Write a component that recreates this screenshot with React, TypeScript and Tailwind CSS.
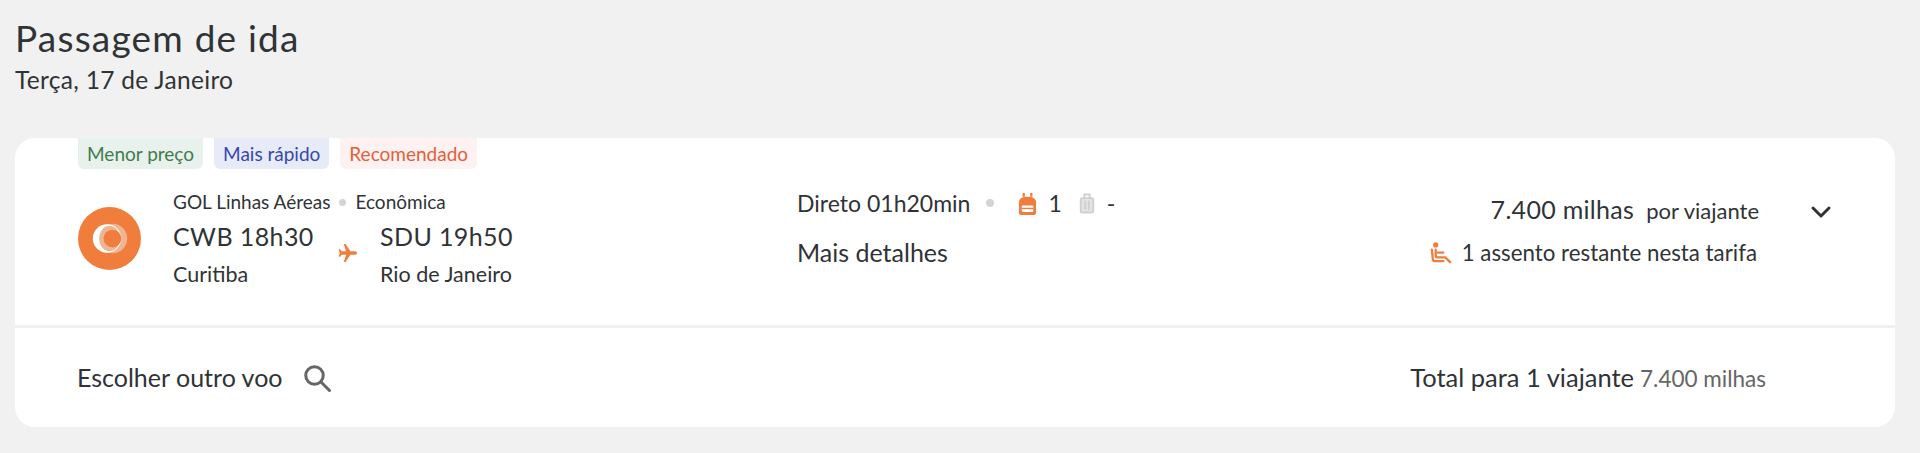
export default function App() {
  const font = { fontFamily: 'Lato, "Noto Sans", sans-serif' };
  return (
    <div style={font} className="h-[453px] bg-[#f1f1f1] px-[15px] pt-[16px] text-[#303336]">
      <h1 className="text-[37px] leading-[44px] font-normal tracking-[1.2px]">Passagem de ida</h1>
      <p className="mt-[4px] text-[24.5px] leading-[32px] tracking-[0.3px]">Terça, 17 de Janeiro</p>
      <div className="mt-[42px] h-[289px] w-[1880px] overflow-hidden rounded-[20px] bg-white">
        <div className="h-[187px] px-[63px]">
          <div className="flex gap-[11px]">
            <span className="h-[31px] rounded-b-[6px] bg-[#e8f1eb] px-[9px] text-[19px] leading-[31px] text-[#3f7d4f]">Menor preço</span>
            <span className="h-[31px] rounded-b-[6px] bg-[#e7ebf7] px-[9px] text-[19px] leading-[31px] text-[#3549ad]">Mais rápido</span>
            <span className="h-[31px] rounded-b-[6px] bg-[#fdf2f1] px-[9px] text-[19px] leading-[31px] text-[#e2603a]">Recomendado</span>
          </div>
          <div className="flex">
            <div className="mt-[38px] h-[63px] w-[63px] shrink-0">
              <svg viewBox="0 0 64 64" className="h-[63px] w-[63px]">
                <circle cx="32" cy="32" r="32" fill="#f07d3c" />
                <circle cx="35" cy="32" r="15" fill="#edb594" />
                <circle cx="29.5" cy="32" r="14.5" fill="#fff" />
                <ellipse cx="32" cy="32" rx="10.5" ry="13" fill="#edb594" />
                <circle cx="35" cy="32" r="9" fill="#f07d3c" />
              </svg>
            </div>
            <div className="ml-[32px] w-[624px] shrink-0">
              <div className="mt-[21px] flex items-center text-[19px] leading-[24px]">
                GOL Linhas Aéreas
                <span className="mx-[9px] h-[7px] w-[7px] rounded-full bg-[#d4d4d4]" />
                Econômica
              </div>
              <div className="flex">
                <div className="w-[163px]">
                  <div className="mt-[7px] text-[25px] leading-[30px] tracking-[0.4px]">CWB 18h30</div>
                  <div className="mt-[9px] text-[21.5px] leading-[28px]">Curitiba</div>
                </div>
                <svg viewBox="0 0 24 24" className="mt-[27px] h-[24px] w-[24px] shrink-0 fill-[#f07d3c]">
                  <path d="M21 12c0-1-1-1.7-2-1.7h-4.6L9.6 3H7.7l2.4 7.3H5.8L4 8.2H2.6L3.8 12l-1.2 3.8H4l1.8-2.1h4.3L7.7 21h1.9l4.8-7.3H19c1 0 2-.7 2-1.7z" />
                </svg>
                <div className="ml-[20px]">
                  <div className="mt-[7px] text-[25px] leading-[30px] tracking-[0.4px]">SDU 19h50</div>
                  <div className="mt-[9px] text-[21.5px] leading-[28px]">Rio de Janeiro</div>
                </div>
              </div>
            </div>
            <div className="w-[500px] shrink-0">
              <div className="mt-[19px] flex h-[30px] items-center text-[23px]">
                <span>Direto</span>
                <span className="ml-[6px]">01h20min</span>
                <span className="ml-[16px] h-[8px] w-[8px] rounded-full bg-[#d4d4d4]" />
                <svg viewBox="0 0 20 24" className="ml-[24px] h-[23px] w-[19px] fill-none">
                  <path d="M6 1v4M14 1v4" stroke="#f07d3c" strokeWidth="2.4" />
                  <path d="M1 11c0-4 3-6 9-6s9 2 9 6v11c0 1-1 2-2 2H3c-1 0-2-1-2-2z" fill="#f07d3c" />
                  <rect x="4" y="14" width="12" height="7" rx="1" fill="#fff" />
                  <rect x="4" y="16.5" width="12" height="1.4" fill="#f07d3c" />
                </svg>
                <span className="ml-[11px]">1</span>
                <svg viewBox="0 0 20 24" className="ml-[16px] h-[23px] w-[18px] fill-none stroke-[#cfcfcf]" strokeWidth="2">
                  <path d="M7 6V2h6v4" />
                  <rect x="3" y="6" width="14" height="16" rx="2" fill="#e4e4e4" />
                  <path d="M8 9v10M12 9v10" />
                </svg>
                <span className="ml-[11px]">-</span>
              </div>
              <div className="mt-[19px] text-[25px] leading-[30px]">Mais detalhes</div>
            </div>
            <div className="flex w-[462px] shrink-0 flex-col items-end">
              <div className="mt-[26px] flex h-[30px] items-center">
                <span className="text-[25px] tracking-[0.3px]">7.400 milhas</span>
                <span className="ml-[12px] text-[22px]">por viajante</span>
              </div>
              <div className="mr-[2px] mt-[13px] flex h-[30px] items-center whitespace-nowrap text-[22.3px]">
                <svg viewBox="0 0 24 24" className="mr-[10px] h-[23px] w-[23px] fill-none stroke-[#f07d3c]" strokeWidth="2.4" strokeLinecap="round" strokeLinejoin="round">
                  <circle cx="7" cy="3" r="1.5" fill="#f07d3c" />
                  <path d="M3 8l1 10c0 1 1 2 2 2h9" />
                  <path d="M7 8v6c0 1 1 2 2 2h8l5 5" />
                  <path d="M9 11h6" />
                </svg>
                1 assento restante nesta tarifa
              </div>
            </div>
            <svg viewBox="0 0 24 24" className="ml-[50px] mt-[31px] h-[24px] w-[24px] shrink-0 fill-none stroke-[#303336]" strokeWidth="3" strokeLinecap="round" strokeLinejoin="round">
              <path d="M4 8l8 8 8-8" />
            </svg>
          </div>
        </div>
        <div className="h-[3px] bg-[#f0f0f0]" />
        <div className="flex h-[99px] items-center px-[62px]">
          <span className="text-[25px]">Escolher outro voo</span>
          <svg viewBox="0 0 24 24" className="ml-[19px] h-[30px] w-[30px] fill-none stroke-[#666]" strokeWidth="2.4" strokeLinecap="round">
            <circle cx="10" cy="10" r="7" />
            <path d="M15 15l7 7" />
          </svg>
          <div className="ml-auto mr-[67px] flex items-baseline">
            <span className="text-[25.5px]">Total para 1 viajante</span>
            <span className="ml-[6px] text-[22.5px] text-[#666]">7.400 milhas</span>
          </div>
        </div>
      </div>
    </div>
  );
}
